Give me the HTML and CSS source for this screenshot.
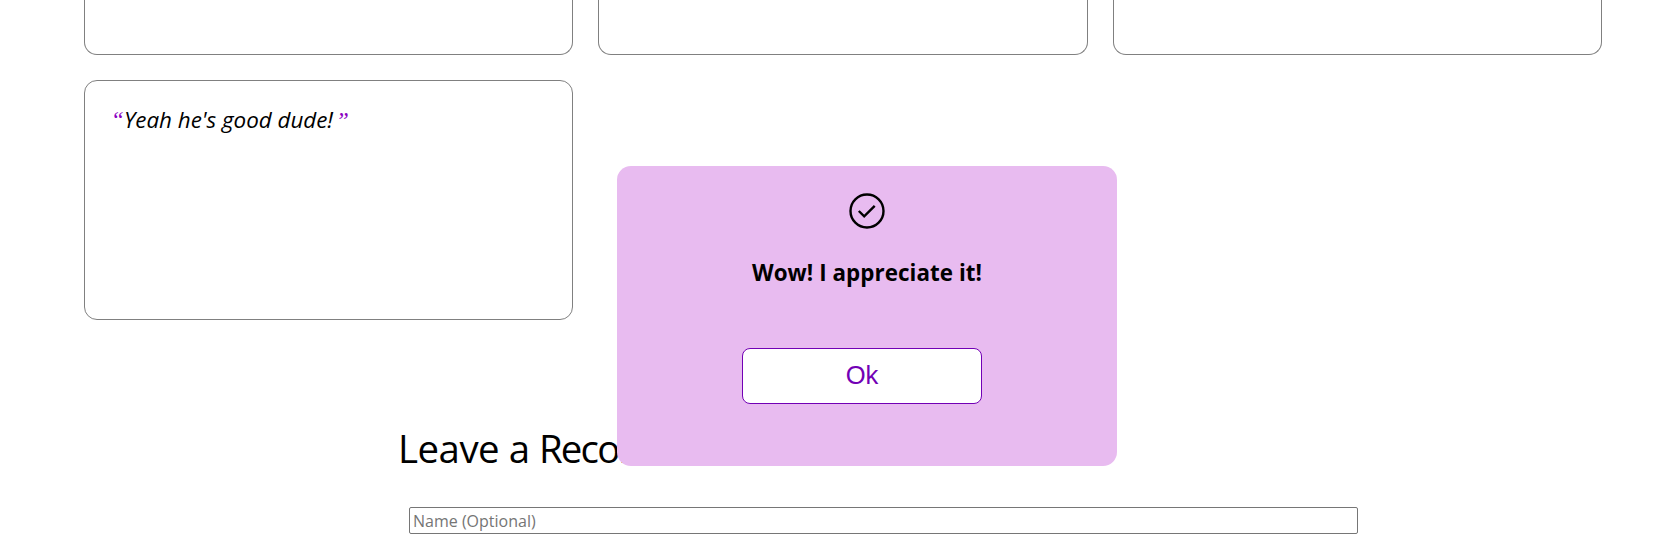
FILE: index.html
```html
<!DOCTYPE html>
<html lang="en">
<head>
<meta charset="utf-8">
<title>Recommendations</title>
<link rel="stylesheet" href="styles.css">
</head>
<body>
<section class="cards">
  <article class="card card-cut"></article>
  <article class="card card-cut"></article>
  <article class="card card-cut"></article>
  <article class="card"><span class="mark">“</span><span class="quote">Yeah he's good dude!</span><span class="mark mark-end">”</span></article>
</section>
<section class="form">
  <h2 class="title">Leave a <span class="tight">Recommendation</span></h2>
  <input class="name" type="text" placeholder="Name (Optional)">
</section>
<div class="popup">
  <svg class="icon" viewBox="0 0 36 36" fill="none" stroke="#000" stroke-width="2.4"><circle cx="18" cy="18" r="16.5"/><path d="M9.8 18l5.4 5.4L25.7 12.8"/></svg>
  <h3 class="message">Wow! I appreciate it!</h3>
  <button class="ok">Ok</button>
</div>
</body>
</html>
```
FILE: styles.css
```css
* { box-sizing: border-box; }
html { overflow: hidden; }
body {
  margin: 0;
  height: 554px;
  overflow: hidden;
  background: #fff;
  font-family: "Trebuchet MS", "Open Sans", sans-serif;
}
.cards {
  display: grid;
  grid-template-columns: 489px 490px 489px;
  gap: 25px;
  padding: 0 51px 0 84px;
}
.card {
  height: 240px;
  padding: 24px 27px;
  border: 1px solid gray;
  border-radius: 13px;
  font-size: 22.4px;
  line-height: 30px;
  white-space: nowrap;
}
.card-cut {
  height: 55px;
  border-top: 0;
  border-radius: 0 0 13px 13px;
}
.quote {
  font-style: italic;
  font-weight: 500;
  letter-spacing: -0.02px;
}
.mark {
  display: inline-block;
  width: 12px;
  color: #8a00c2;
  font-family: "Liberation Serif", serif;
  font-size: 23px;
  font-style: italic;
  line-height: 24px;
  text-indent: -1px;
}
.mark-end { margin-left: 4px; }
.form {
  display: flex;
  flex-direction: column;
  padding: 104px 295px 0 398px;
}
.title {
  margin: 0;
  font-size: 38.4px;
  font-weight: 400;
  letter-spacing: -0.5px;
  line-height: 48px;
  white-space: nowrap;
}
.tight { letter-spacing: -1.8px; }
.name {
  width: 949px;
  height: 27px;
  margin: 35px 0 0 11px;
  padding: 1px 3px;
  border: 1px solid #767676;
  border-radius: 2px;
  font-family: inherit;
  font-size: 16px;
  font-weight: 500;
}
.name::placeholder { color: #757575; }
.popup {
  position: absolute;
  top: 165.7px;
  left: 617px;
  width: 500px;
  height: 300px;
  padding-top: 27px;
  display: flex;
  flex-direction: column;
  align-items: center;
  border-radius: 14px;
  background: #e8bbf0;
}
.icon { width: 36px; height: 36px; }
.message {
  margin: 28px 0 0;
  font-size: 22.4px;
  font-weight: 700;
  letter-spacing: 0.05px;
  line-height: 32px;
  white-space: nowrap;
}
.ok {
  width: 240px;
  height: 56px;
  margin: 59.3px 10px 0 0;
  padding: 0;
  border: 1px solid #7200b5;
  border-radius: 8px;
  background: #fff;
  color: #7200b5;
  font-family: "Liberation Sans", Arial, sans-serif;
  font-size: 25.6px;
}
```
